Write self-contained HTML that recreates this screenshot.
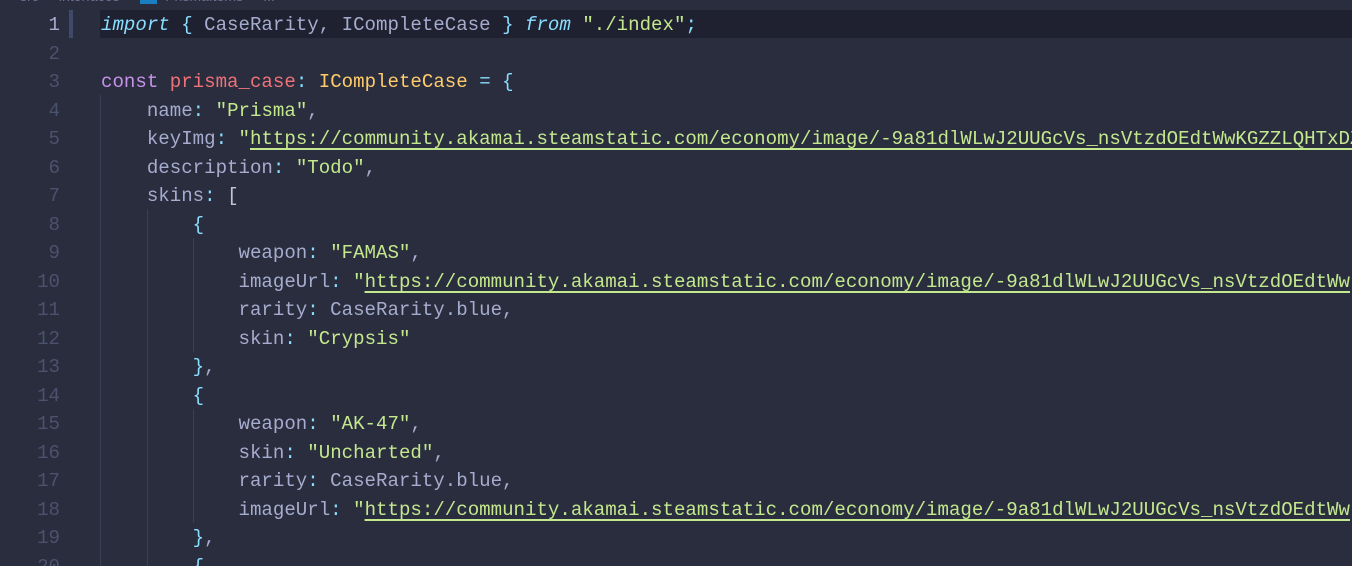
<!DOCTYPE html>
<html><head><meta charset="utf-8"><style>
html,body{margin:0;padding:0;width:1352px;height:566px;overflow:hidden;background:#292d3e;}
.ed{position:relative;width:1352px;height:566px;overflow:hidden;font-family:"Liberation Mono",monospace;font-size:19.1px;}
.hl{position:absolute;left:100px;top:10px;width:1252px;height:28px;background:#1f2130;}
.mk{position:absolute;left:69px;top:10px;width:4px;height:28px;background:#3f4a6a;}
.ln{position:absolute;left:0;width:60px;text-align:right;color:#4b526d;line-height:28.5px;margin-top:1px}
.c{position:absolute;left:101px;white-space:pre;color:#a6accd;line-height:28.5px;margin-top:1px}
.g{position:absolute;width:1px;background:#3a3f58;}
.k{color:#89ddff;font-style:italic}.p{color:#89ddff}.s{color:#c3e88d}.u{color:#c3e88d;text-decoration:underline;text-decoration-thickness:2px;text-underline-offset:4px}
.v{color:#f07178}.t{color:#ffcb6b}.kw{color:#c792ea}.b{color:#bfc7d5}.crumb{position:absolute;top:-12px;left:20px;color:#6b7190;font-family:"Liberation Sans",sans-serif;font-size:14px;white-space:pre}
</style></head><body><div class="ed">
<div class="crumb">src  ›  interfaces  ›  <span style="background:#1a7fc1;color:#1a7fc1">TS</span>  PrismaItems  ›  ...</div>
<div class="hl"></div><div class="mk"></div>
<div class="g" style="left:100px;top:95px;height:471px"></div>
<div class="g" style="left:147px;top:209px;height:357px"></div>
<div class="g" style="left:193px;top:238px;height:114px"></div>
<div class="g" style="left:193px;top:409px;height:114px"></div>
<div class="ln" style="top:10px;color:#a6accd">1</div>
<div class="ln" style="top:38.5px">2</div>
<div class="ln" style="top:67px">3</div>
<div class="ln" style="top:95.5px">4</div>
<div class="ln" style="top:124px">5</div>
<div class="ln" style="top:152.5px">6</div>
<div class="ln" style="top:181px">7</div>
<div class="ln" style="top:209.5px">8</div>
<div class="ln" style="top:238px">9</div>
<div class="ln" style="top:266.5px">10</div>
<div class="ln" style="top:295px">11</div>
<div class="ln" style="top:323.5px">12</div>
<div class="ln" style="top:352px">13</div>
<div class="ln" style="top:380.5px">14</div>
<div class="ln" style="top:409px">15</div>
<div class="ln" style="top:437.5px">16</div>
<div class="ln" style="top:466px">17</div>
<div class="ln" style="top:494.5px">18</div>
<div class="ln" style="top:523px">19</div>
<div class="ln" style="top:551.5px">20</div>
<div class="c" style="top:10px"><span class="k">import</span> <span class="p">{</span> CaseRarity, ICompleteCase <span class="p">}</span> <span class="k">from</span> <span class="s">"./index"</span><span class="p">;</span></div>
<div class="c" style="top:67px"><span class="kw">const</span> <span class="v">prisma_case</span><span class="p">:</span> <span class="t">ICompleteCase</span> <span class="p">=</span> <span class="p">{</span></div>
<div class="c" style="top:95.5px">    name<span class="p">:</span> <span class="s">"Prisma"</span>,</div>
<div class="c" style="top:124px">    keyImg<span class="p">:</span> <span class="s">"<span class="u">https://community.akamai.steamstatic.com/economy/image/-9a81dlWLwJ2UUGcVs_nsVtzdOEdtWwKGZZLQHTxDZ7I56KU0</span></span></div>
<div class="c" style="top:152.5px">    description<span class="p">:</span> <span class="s">"Todo"</span>,</div>
<div class="c" style="top:181px">    skins<span class="p">:</span> <span class="b">[</span></div>
<div class="c" style="top:209.5px">        <span class="p">{</span></div>
<div class="c" style="top:238px">            weapon<span class="p">:</span> <span class="s">"FAMAS"</span>,</div>
<div class="c" style="top:266.5px">            imageUrl<span class="p">:</span> <span class="s">"<span class="u">https://community.akamai.steamstatic.com/economy/image/-9a81dlWLwJ2UUGcVs_nsVtzdOEdtWw</span></span></div>
<div class="c" style="top:295px">            rarity<span class="p">:</span> CaseRarity.blue,</div>
<div class="c" style="top:323.5px">            skin<span class="p">:</span> <span class="s">"Crypsis"</span></div>
<div class="c" style="top:352px">        <span class="p">}</span>,</div>
<div class="c" style="top:380.5px">        <span class="p">{</span></div>
<div class="c" style="top:409px">            weapon<span class="p">:</span> <span class="s">"AK-47"</span>,</div>
<div class="c" style="top:437.5px">            skin<span class="p">:</span> <span class="s">"Uncharted"</span>,</div>
<div class="c" style="top:466px">            rarity<span class="p">:</span> CaseRarity.blue,</div>
<div class="c" style="top:494.5px">            imageUrl<span class="p">:</span> <span class="s">"<span class="u">https://community.akamai.steamstatic.com/economy/image/-9a81dlWLwJ2UUGcVs_nsVtzdOEdtWw</span></span></div>
<div class="c" style="top:523px">        <span class="p">}</span>,</div>
<div class="c" style="top:551.5px">        <span class="p">{</span></div>
</div></body></html>
